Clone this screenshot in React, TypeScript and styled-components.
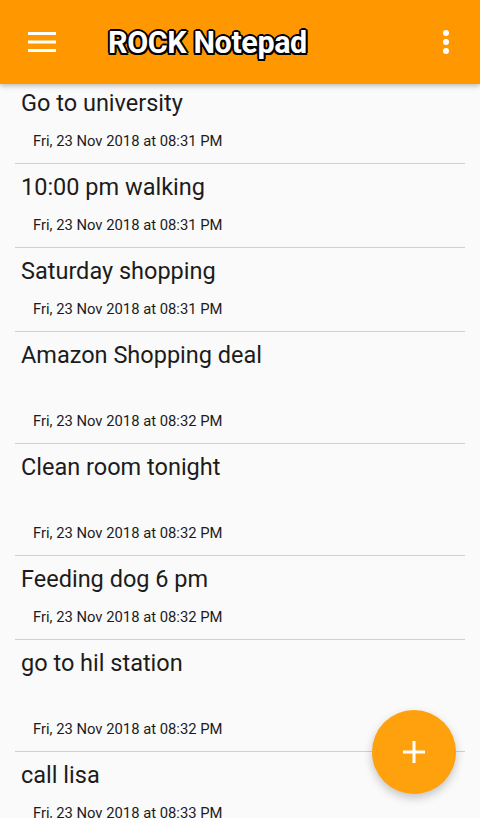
import styled, { createGlobalStyle } from 'styled-components';

const GlobalStyle = createGlobalStyle`
  html, body {
    margin: 0;
    padding: 0;
    background: #fafafa;
    font-family: Roboto, "Noto Sans", sans-serif;
  }
`;

const notes = [
  { title: 'Go to university', date: 'Fri, 23 Nov 2018 at 08:31 PM', tall: false },
  { title: '10:00 pm walking', date: 'Fri, 23 Nov 2018 at 08:31 PM', tall: false },
  { title: 'Saturday shopping', date: 'Fri, 23 Nov 2018 at 08:31 PM', tall: false },
  { title: 'Amazon Shopping deal', date: 'Fri, 23 Nov 2018 at 08:32 PM', tall: true },
  { title: 'Clean room tonight', date: 'Fri, 23 Nov 2018 at 08:32 PM', tall: true },
  { title: 'Feeding dog 6 pm', date: 'Fri, 23 Nov 2018 at 08:32 PM', tall: false },
  { title: 'go to hil station', date: 'Fri, 23 Nov 2018 at 08:32 PM', tall: true },
  { title: 'call lisa', date: 'Fri, 23 Nov 2018 at 08:33 PM', tall: false },
];

const App = () => {
  return (
    <Screen>
      <GlobalStyle />
      <Toolbar>
        <MenuIcon viewBox="0 0 28 20">
          <rect x="0" y="0" width="28" height="3" fill="#fff" />
          <rect x="0" y="8.5" width="28" height="3" fill="#fff" />
          <rect x="0" y="17" width="28" height="3" fill="#fff" />
        </MenuIcon>
        <Title>ROCK Notepad</Title>
        <MoreIcon viewBox="0 0 8 24">
          <circle cx="4" cy="3" r="3" fill="#fff" />
          <circle cx="4" cy="12" r="3" fill="#fff" />
          <circle cx="4" cy="21" r="3" fill="#fff" />
        </MoreIcon>
      </Toolbar>
      <NoteList>
        {notes.map((note, index) => (
          <NoteItem key={index} $tall={note.tall}>
            <NoteTitle>{note.title}</NoteTitle>
            <NoteDate>{note.date}</NoteDate>
          </NoteItem>
        ))}
      </NoteList>
      <Fab>
        <svg width="26" height="26" viewBox="0 0 26 26">
          <rect x="11.5" y="2" width="3" height="22" fill="#fff" />
          <rect x="2" y="11.5" width="22" height="3" fill="#fff" />
        </svg>
      </Fab>
    </Screen>
  );
};

export default App;

const Screen = styled.div`
  position: relative;
  width: 480px;
  height: 818px;
  overflow: hidden;
  background: #fafafa;
`;

const Toolbar = styled.header`
  position: relative;
  z-index: 2;
  height: 84px;
  background: #ff9800;
  display: flex;
  align-items: center;
  padding: 0 30px 0 28px;
  box-sizing: border-box;
  box-shadow: 0 2px 5px rgba(0, 0, 0, 0.25);
`;

const MenuIcon = styled.svg`
  width: 28px;
  height: 20px;
  flex: none;
`;

const Title = styled.h1`
  flex: 1;
  margin: 0 0 0 52px;
  font-family: Roboto, sans-serif;
  font-size: 30.5px;
  font-weight: 700;
  letter-spacing: -0.4px;
  color: #fff;
  text-shadow:
    -1.5px -1.5px 0 #000,
    1.5px -1.5px 0 #000,
    -1.5px 1.5px 0 #000,
    1.5px 1.5px 0 #000,
    0 2px 0 #000,
    2px 0 0 #000,
    -2px 0 0 #000,
    0 -2px 0 #000;
`;

const MoreIcon = styled.svg`
  width: 8px;
  height: 24px;
  flex: none;
`;

const NoteList = styled.ul`
  list-style: none;
  margin: -4px 0 0;
  padding: 0 15px;
`;

const NoteItem = styled.li<{ $tall: boolean }>`
  height: ${(p) => (p.$tall ? '112px' : '84px')};
  box-sizing: border-box;
  border-bottom: 1px solid #cfcfcf;
  padding: 9px 6px 12px;
  display: flex;
  flex-direction: column;
  justify-content: space-between;
`;

const NoteTitle = styled.div`
  font-size: 23.5px;
  line-height: 28px;
  color: #1c1c1c;
`;

const NoteDate = styled.div`
  padding-left: 12px;
  font-size: 14.8px;
  line-height: 20px;
  color: #1c1c1c;
`;

const Fab = styled.button`
  position: absolute;
  left: 372px;
  top: 710px;
  width: 84px;
  height: 84px;
  border: none;
  border-radius: 50%;
  background: #ffa00d;
  display: flex;
  align-items: center;
  justify-content: center;
  box-shadow: 0 4px 10px rgba(0, 0, 0, 0.22);
  padding: 0;
`;
